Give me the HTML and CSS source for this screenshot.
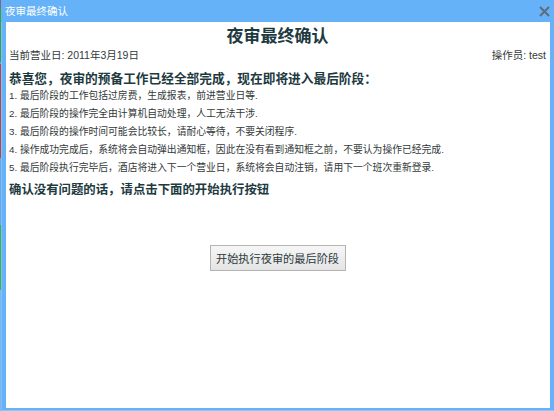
FILE: index.html
```html
<!DOCTYPE html>
<html lang="zh-CN">
<head>
<meta charset="utf-8">
<title>夜审最终确认</title>
<link rel="stylesheet" href="styles.css">
</head>
<body>
<div class="desk-strip"></div>
<div class="window">
  <div class="titlebar">
    <span class="title-text">夜审最终确认</span>
    <span class="close" aria-label="关闭">
      <svg width="11" height="11" viewBox="0 0 11 11"><path d="M1 1 L10 10 M10 1 L1 10" stroke="#5f6b78" stroke-width="2" fill="none"/></svg>
    </span>
  </div>
  <div class="frame">
    <div class="panel">
      <h1 class="heading">夜审最终确认</h1>
      <div class="info">
        <span>当前营业日: 2011年3月19日</span>
        <span>操作员: test</span>
      </div>
      <h2 class="sub intro">恭喜您，夜审的预备工作已经全部完成，现在即将进入最后阶段：</h2>
      <ol class="steps">
        <li>1. 最后阶段的工作包括过房费，生成报表，前进营业日等.</li>
        <li>2. 最后阶段的操作完全由计算机自动处理，人工无法干涉.</li>
        <li>3. 最后阶段的操作时间可能会比较长，请耐心等待，不要关闭程序.</li>
        <li>4. 操作成功完成后，系统将会自动弹出通知框，因此在没有看到通知框之前，不要认为操作已经完成.</li>
        <li>5. 最后阶段执行完毕后，酒店将进入下一个营业日，系统将会自动注销，请用下一个班次重新登录.</li>
      </ol>
      <h2 class="sub confirm">确认没有问题的话，请点击下面的开始执行按钮</h2>
      <div class="actions">
        <button class="btn">开始执行夜审的最后阶段</button>
      </div>
    </div>
  </div>
</div>
</body>
</html>
```

FILE: styles.css
```css
html, body {
  margin: 0;
  padding: 0;
  width: 554px;
  height: 411px;
  overflow: hidden;
}
body {
  display: flex;
  background: #66b2f8;
  font-family: "Liberation Sans", "Noto Sans CJK SC", sans-serif;
}
.desk-strip {
  width: 1px;
  flex: none;
  background: linear-gradient(to bottom,
    #7a6a8a 0, #7a6a8a 8px,
    #3aa040 8px, #3aa040 62px,
    #58a8e8 62px, #58a8e8 64px,
    #c04040 64px, #c04040 158px,
    #6aa6e6 158px, #6aa6e6 225px,
    #40b040 225px, #40b040 290px,
    #7ab6f0 290px, #7ab6f0 411px);
}
.window {
  flex: 1;
  display: flex;
  flex-direction: column;
}
.titlebar {
  height: 22px;
  display: flex;
  align-items: center;
  justify-content: space-between;
  padding: 0 4px 2px 4px;
  box-sizing: border-box;
}
.title-text {
  color: #ffffff;
  font-size: 10.5px;
  font-family: "Noto Sans CJK SC", sans-serif;
}
.close {
  display: flex;
  margin-top: 2px;
}
.frame {
  flex: 1;
  display: flex;
  padding: 0 4px 2px 5px;
  border-bottom: 1px solid #8cc6fb;
  background: linear-gradient(to right, #7fc0f9 0, #7fc0f9 1px, #66b2f8 1px);
}
.panel {
  flex: 1;
  background: #ffffff;
  padding: 0 4px 0 3px;
  color: #333333;
}
.heading {
  margin: 2px 0 0 0;
  text-align: center;
  font-size: 17px;
  line-height: 22px;
  font-weight: bold;
  color: #1d3a3f;
  font-family: "Noto Sans CJK SC", sans-serif;
}
.info {
  margin-top: 2px;
  display: flex;
  justify-content: space-between;
  font-size: 10.5px;
  line-height: 14px;
  color: #34393a;
}
.sub {
  margin: 7px 0 0 0;
  font-size: 12.4px;
  line-height: 18px;
  font-weight: bold;
  color: #1d3a3f;
  font-family: "Noto Sans CJK SC", sans-serif;
}
.sub.intro {
  font-size: 12.7px;
}
.steps {
  list-style: none;
  margin: 0;
  padding: 0;
  font-size: 9.8px;
  line-height: 18px;
  color: #34393a;
}
.sub.confirm {
  margin-top: 3px;
}
.actions {
  display: flex;
  justify-content: center;
  margin-top: 47px;
}
.btn {
  width: 136px;
  height: 26px;
  padding: 0;
  border: 1px solid #b4b4b4;
  background: linear-gradient(to bottom, #f6f6f6, #e4e4e4);
  color: #2c3a3c;
  font-size: 11.2px;
  font-family: "Noto Sans CJK SC", sans-serif;
  cursor: pointer;
}
```
